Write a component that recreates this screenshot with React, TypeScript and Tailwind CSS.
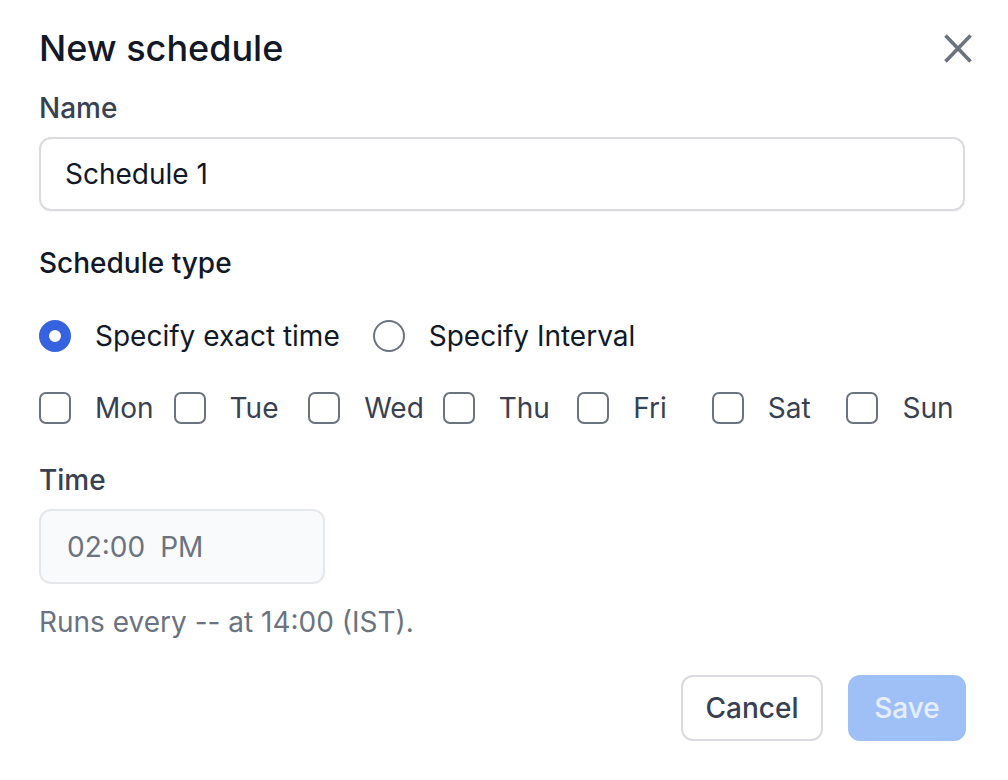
import React, { useState } from 'react';

const days = ['Mon', 'Tue', 'Wed', 'Thu', 'Fri', 'Sat', 'Sun'];

function CloseIcon() {
  return (
    <svg width="28" height="29" viewBox="0 0 28 29" fill="none" stroke="#6b7280" strokeWidth="3.6">
      <line x1="1.5" y1="1.5" x2="26.5" y2="27.5" />
      <line x1="26.5" y1="1.5" x2="1.5" y2="27.5" />
    </svg>
  );
}

function Radio({ checked, label }: { checked: boolean; label: string }) {
  return (
    <label className="flex items-center gap-[24px] cursor-pointer">
      <span
        className={
          checked
            ? 'w-[32px] h-[32px] rounded-full border-[10px] border-[#3563e0] bg-white'
            : 'w-[32px] h-[32px] rounded-full border-2 border-[#6b7280] bg-white'
        }
      />
      <span className="text-[28px] leading-[40px] text-[#111827]">{label}</span>
    </label>
  );
}

function DayCheckbox({ day }: { day: string }) {
  return (
    <label className="flex items-center gap-[24px] cursor-pointer">
      <span className="w-[32px] h-[32px] shrink-0 rounded-[7px] border-2 border-[#6b7280] bg-white" />
      <span className="text-[28px] leading-[40px] text-[#374151]">{day}</span>
    </label>
  );
}

export default function App() {
  const [name] = useState('Schedule 1');

  return (
    <div className="min-h-screen bg-white font-['Inter','Liberation_Sans',sans-serif]">
      <div className="pt-[20px] pl-[39px] pr-[43px]">
        {/* Header */}
        <div className="flex items-center justify-between h-[56px]">
          <h2 className="text-[36px] leading-[56px] font-medium text-[#111827]">New schedule</h2>
          <button className="-mr-[7px] mt-[1px]">
            <CloseIcon />
          </button>
        </div>

        {/* Name */}
        <div className="mt-[12px] text-[28px] leading-[40px] font-medium text-[#374151]">Name</div>
        <div className="mt-[9px] h-[74px] rounded-[12px] border-2 border-[#d9dbde] shadow-[0_1px_2px_rgba(0,0,0,0.05)] flex items-center px-[24px]">
          <span className="text-[28px] text-[#111827]">{name}</span>
        </div>

        {/* Schedule type */}
        <div className="mt-[32px] text-[28px] leading-[40px] font-medium text-[#111827]">Schedule type</div>
        <div className="mt-[33px] flex items-center gap-[33px] h-[40px]">
          <Radio checked label="Specify exact time" />
          <Radio checked={false} label="Specify Interval" />
        </div>

        {/* Days */}
        <div className="mt-[32px] grid grid-cols-7 gap-x-[16px] h-[40px]">
          {days.map((d) => (
            <DayCheckbox key={d} day={d} />
          ))}
        </div>

        {/* Time */}
        <div className="mt-[32px] text-[28px] leading-[40px] font-medium text-[#374151]">Time</div>
        <div className="mt-[9px] w-[286px] h-[75px] rounded-[12px] border-2 border-[#e5e7eb] bg-[#f9fafb] flex items-center px-[26px]">
          <span className="text-[28px] text-[#6b7280]">
            02:00<span className="ml-[15px]">PM</span>
          </span>
        </div>
        <p className="mt-[18px] text-[28px] leading-[40px] text-[#6b7280]">Runs every -- at 14:00 (IST).</p>

        {/* Actions */}
        <div className="mt-[33px] flex justify-end gap-[25px] -mr-[1px]">
          <button className="w-[142px] h-[66px] rounded-[12px] border-2 border-[#d9dbde] bg-white text-[28px] font-medium text-[#374151]">
            Cancel
          </button>
          <button className="w-[118px] h-[66px] rounded-[12px] bg-[#9fc0f6] text-[28px] font-medium text-[#e6eefd]">
            Save
          </button>
        </div>
      </div>
    </div>
  );
}
